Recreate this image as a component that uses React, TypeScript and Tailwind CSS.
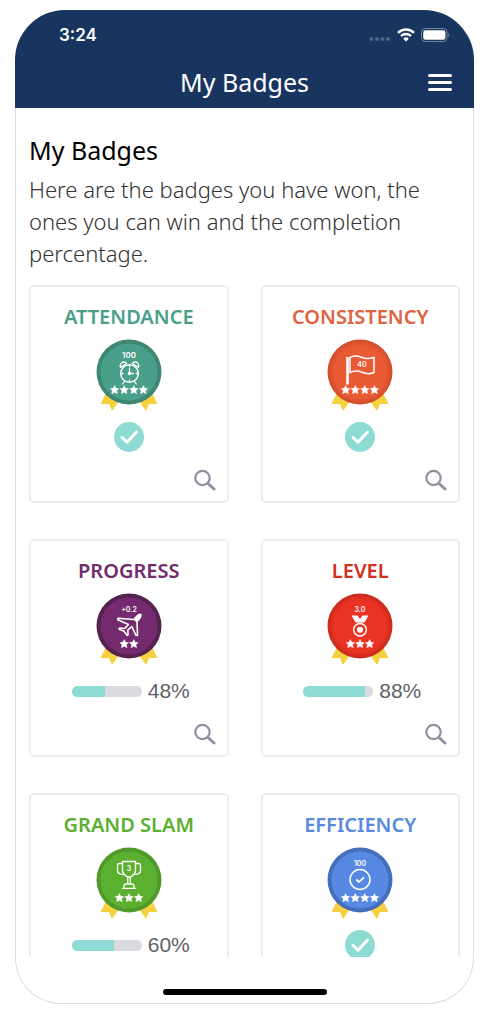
import type { ReactNode } from "react";

type Badge = {
  name: string;
  titleClass: string;
  fill: string;
  ring: string;
  softRing?: boolean;
  stars: number;
  art: ReactNode;
  percent?: number;
};

const line = {
  fill: "none",
  stroke: "#fff",
  strokeWidth: 1.3,
  strokeLinejoin: "round" as const,
  strokeLinecap: "round" as const,
};

function Label({ x = 33, y, size = 8, children }: { x?: number; y: number; size?: number; children: string }) {
  return (
    <text x={x} y={y} textAnchor="middle" fill="#fff" fontSize={size} fontWeight={600} fontFamily="Inter, sans-serif">
      {children}
    </text>
  );
}

const ClockArt = (
  <>
    <Label y={19}>100</Label>
    <circle cx="33.5" cy="34.5" r="8.8" {...line} strokeWidth={1.5} />
    <path d="M24.6 28.4c-1.2-2.6.6-5.4 3.4-5.4 1.3 0 2.1.6 2.7 1.5zM42.4 28.4c1.2-2.6-.6-5.4-3.4-5.4-1.3 0-2.1.6-2.7 1.5z" {...line} />
    <path d="M33.5 29.5v5h4M28.4 42.5l-1.6 2.5M38.6 42.5l1.6 2.5M33.5 26.5v1.2M33.5 41.2v1.3M26 34.5h1M40.2 34.5h1" {...line} />
    <circle cx="33.5" cy="34.5" r="1.8" fill="#fff" />
  </>
);

const FlagArt = (
  <>
    <path d="M20.5 18v27.5" {...line} strokeWidth={2.6} strokeLinecap="butt" />
    <path d="M23 18.5c4-2.5 8-1.5 12 0s7 1.5 12 0v15c-4 1.800-8 1.500-12-.2s-8-1.800-12 .2z" {...line} strokeWidth={1.5} strokeLinejoin="miter" />
    <Label x={35} y={28} size={7}>40</Label>
  </>
);

const PlaneArt = (
  <>
    <Label y={19} size={7}>+0.2</Label>
    <path d="M44.8 21.500C43.500 21 40 24 38 26.500L22 25.200l-.3 1.600L32.500 31.500l-3.700 4-5.300-.5-.4 1.200 4.700 1.900 3.200 4.100 1.100-.3-.3-4.800 4-3.600 4.200 9 1.500-.2-.5-14.100c2.300-2.200 4.600-5 3.800-6.700z" {...line} strokeWidth={1.6} />
    <path d="M44.800 21.500c-1.500-.5-5 3-7 5.500l2.800 2.200c2.700-2.500 5.200-5.700 4.200-7.700z" fill="#fff" />
  </>
);

const MedalArt = (
  <>
    <Label y={19} size={7}>3.0</Label>
    <path d="M24.500 22.500h6L33 26l2.500-3.500h6L37.500 29.500h-9z" fill="#fff" />
    <circle cx="33" cy="36.700" r="6.300" {...line} strokeWidth={1.5} />
    <circle cx="33" cy="36.700" r="3" fill="#fff" />
  </>
);

const TrophyArt = (
  <>
    <path d="M26.500 14.500h13v9c0 3.500-3 5-4.800 6.500h-3.400c-1.800-1.500-4.800-3-4.800-6.500z" {...line} />
    <path d="M26.500 16.500h-3c-1.300 0-2 .8-2 2v5c0 2.500 2.500 4 6.500 4M39.500 16.500h3c1.300 0 2 .8 2 2v5c0 2.500-2.500 4-6.500 4M31.700 30v7M34.300 30v7M28 41v-2c0-1.300.8-2 2-2h6c1.200 0 2 .7 2 2v2M26.500 41.300h13" {...line} />
    <Label y={24} size={7}>3</Label>
  </>
);

const CheckArt = (
  <>
    <Label y={19} size={7}>100</Label>
    <circle cx="33" cy="32.500" r="10" {...line} strokeWidth={1.5} />
    <path d="M29.800 33l2.200 2 4.600-4.300" {...line} strokeWidth={1.7} />
  </>
);

const badges: Badge[] = [
  { name: "ATTENDANCE", titleClass: "text-[#4a9f8a]", fill: "#4a9f8a", ring: "#3f8673", stars: 4, art: ClockArt },
  { name: "CONSISTENCY", titleClass: "text-[#e1623f]", fill: "#e95a35", ring: "#cf4c2b", softRing: true, stars: 4, art: FlagArt },
  { name: "PROGRESS", titleClass: "text-[#722b6c]", fill: "#752a6f", ring: "#56224f", stars: 2, art: PlaneArt, percent: 48 },
  { name: "LEVEL", titleClass: "text-[#d4301f]", fill: "#ea3323", ring: "#c4291c", softRing: true, stars: 3, art: MedalArt, percent: 88 },
  { name: "GRAND SLAM", titleClass: "text-[#5cb031]", fill: "#5bb030", ring: "#4f9a2b", stars: 3, art: TrophyArt, percent: 60 },
  { name: "EFFICIENCY", titleClass: "text-[#5a8adb]", fill: "#5788e2", ring: "#436fbd", stars: 4, art: CheckArt },
];

function Star({ x }: { x: number }) {
  return (
    <path
      transform={`translate(${x} 50.8)`}
      d="M0-4.300 1.400-1.500 4.300-1.200 2.200.9 2.800 4 0 2.500-2.800 4-2.200.9-4.300-1.200-1.400-1.500z"
      fill="#fff"
      stroke="#fff"
      strokeWidth="0.4"
      strokeLinejoin="round"
    />
  );
}

function Medallion({ badge }: { badge: Badge }) {
  const start = 33 - ((badge.stars - 1) * 9.6) / 2;
  const gradientId = `disc-${badge.name.toLowerCase().replace(" ", "-")}`;
  return (
    <svg className="mt-2 h-[73px] w-[66px]" viewBox="0 0 66 73" aria-hidden="true">
      <defs>
        <radialGradient id={gradientId}>
          <stop offset={badge.softRing ? "0.8" : "0.865"} stopColor={badge.fill} />
          <stop offset={badge.softRing ? "1" : "0.885"} stopColor={badge.ring} />
        </radialGradient>
      </defs>
      <path d="M10 54 4.500 65H13l3 7 7-10zM56 54l5.500 11H53l-3 7-7-10z" fill="#f6d13f" />
      <circle cx="33" cy="33" r="32.500" fill={`url(#${gradientId})`} />
      {badge.art}
      {Array.from({ length: badge.stars }, (_, i) => (
        <Star key={i} x={start + i * 9.6} />
      ))}
    </svg>
  );
}

function Status({ badge }: { badge: Badge }) {
  if (badge.percent === undefined) {
    return (
      <svg className="size-[30px]" viewBox="0 0 30 30" role="img" aria-label="Completed">
        <circle cx="15" cy="15" r="15" fill="#8edbd3" />
        <path d="M8 15.500l5 4.700 9.500-10.200" fill="none" stroke="#fff" strokeWidth="3" strokeLinecap="round" strokeLinejoin="round" />
      </svg>
    );
  }
  return (
    <div className="flex items-center gap-[6px] pl-1">
      <div className="h-[11px] w-[70px] overflow-hidden rounded-full bg-[#dadae0]">
        <div className="h-full bg-[#8edbd3]" style={{ width: `${badge.percent}%` }} />
      </div>
      <span className="font-['Liberation_Sans',sans-serif] text-[21px] leading-[30px] text-[#5f6268]">{badge.percent}%</span>
    </div>
  );
}

function BadgeCard({ badge }: { badge: Badge }) {
  return (
    <article className="flex h-[218px] flex-col items-center rounded-[5px] border-2 border-[#ededef] bg-white pt-4">
      <h2 className={`text-[20px] leading-7 font-semibold ${badge.titleClass}`}>{badge.name}</h2>
      <Medallion badge={badge} />
      <div className="mt-[10px] flex h-[30px] items-center">
        <Status badge={badge} />
      </div>
      <button type="button" aria-label={`View ${badge.name}`} className="mt-auto mr-[11px] mb-[10px] self-end">
        <svg className="size-[22px]" viewBox="0 0 22 22" fill="none" stroke="#9090a0">
          <circle cx="8.500" cy="9" r="7.200" strokeWidth="2.200" />
          <path d="M14 14.500l6 5.500" strokeWidth="3" strokeLinecap="round" />
        </svg>
      </button>
    </article>
  );
}

export default function App() {
  return (
    <div className="flex h-screen flex-col bg-white pt-[10px] pr-[10px] pb-[10px] pl-[15px] font-['Noto_Sans',sans-serif]">
      <header className="shrink-0 rounded-t-[50px] bg-[#17355e] text-white">
        <div className="flex h-[50px] items-center justify-between pr-6 pl-11">
          <span className="font-['Inter',sans-serif] text-[17px] leading-6 font-semibold">3:24</span>
          <div className="flex items-center gap-[6px]">
            <svg className="mt-2 h-1 w-[22px]" viewBox="0 0 22 4" fill="#4d658a">
              <circle cx="2.500" cy="2" r="2" />
              <circle cx="8" cy="2" r="2" />
              <circle cx="13.500" cy="2" r="2" />
              <circle cx="19" cy="2" r="2" />
            </svg>
            <svg className="h-[14px] w-[18px]" viewBox="0 0 18 14" fill="none" stroke="#fff">
              <path d="M1 4.800a11.500 11.500 0 0 1 16 0" strokeWidth="2.500" />
              <path d="M4 8a7.200 7.200 0 0 1 10 0" strokeWidth="2.300" />
              <path d="M9 13.500 6.200 10.700a4 4 0 0 1 5.600 0z" fill="#fff" stroke="none" />
            </svg>
            <svg className="h-[14px] w-[29px]" viewBox="0 0 29 14">
              <rect x=".5" y=".5" width="25.500" height="13" rx="3.800" fill="none" stroke="#74869f" />
              <rect x="2.200" y="2.200" width="22.200" height="9.600" rx="2.200" fill="#fff" />
              <path d="M27.300 5v4c1.500-.6 1.500-3.400 0-4z" fill="#74869f" />
            </svg>
          </div>
        </div>
        <div className="grid h-12 grid-cols-[1fr_auto_1fr] items-center px-[22px] pb-1">
          <div className="col-start-2 text-[25px] leading-8">My Badges</div>
          <button type="button" aria-label="Menu" className="justify-self-end">
            <svg className="h-[18px] w-6" viewBox="0 0 24 18" stroke="#fff" strokeWidth="3" strokeLinecap="round">
              <path d="M1.500 2.500h21M1.500 9.500h21M1.500 16.500h21" />
            </svg>
          </button>
        </div>
      </header>

      <div className="flex min-h-0 flex-1 flex-col rounded-b-[46px] border-x border-b border-[#dedee0]">
        <main className="min-h-0 flex-1 overflow-hidden px-[13px] pt-[26px]">
          <h1 className="text-[25px] leading-8 text-black">My Badges</h1>
          <p className="mt-[7px] text-[22px] leading-8 font-light text-[#333]">
            Here are the badges you have won, the ones you can win and the completion percentage.
          </p>
          <section className="mt-4 grid grid-cols-2 gap-x-8 gap-y-9">
            {badges.map((badge) => (
              <BadgeCard key={badge.name} badge={badge} />
            ))}
          </section>
        </main>
        <div className="flex h-[46px] shrink-0 justify-center pt-8">
          <div className="h-[6px] w-[164px] rounded-full bg-black" />
        </div>
      </div>
    </div>
  );
}
